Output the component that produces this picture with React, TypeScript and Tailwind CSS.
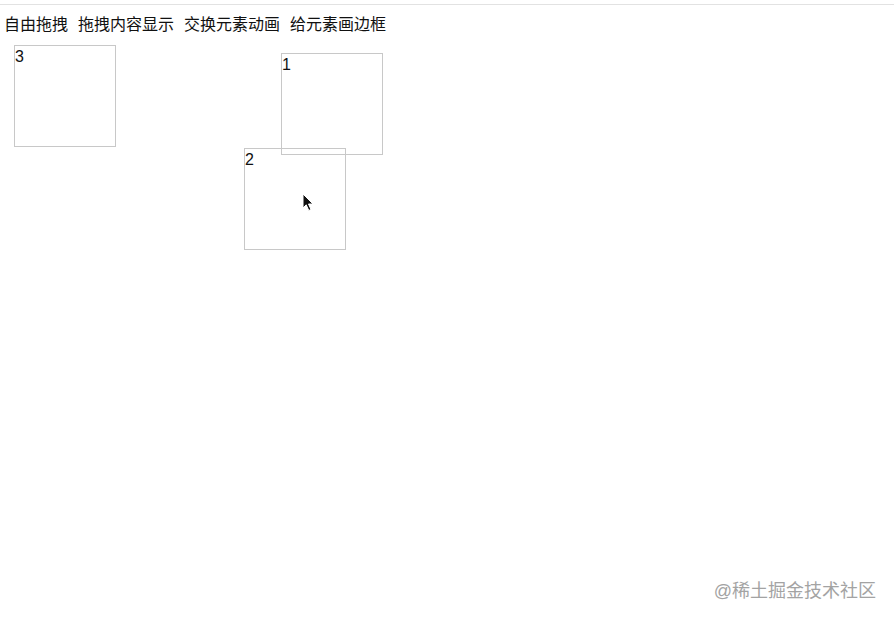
const tabs = ["自由拖拽", "拖拽内容显示", "交换元素动画", "给元素画边框"];

const boxes = [
  { id: 3, cls: "left-[14px] top-[45px]" },
  { id: 1, cls: "left-[281px] top-[53px]" },
  { id: 2, cls: "left-[244px] top-[148px]" },
];

export default function App() {
  return (
    <div
      className="relative h-[620px] w-full overflow-hidden bg-white text-[#111]"
      style={{ fontFamily: '"Liberation Sans", "Noto Sans CJK SC", sans-serif' }}
    >
      <div className="mt-[4px] h-px w-full bg-[#e2e2e2]" />
      <nav className="flex gap-[10px] pl-[4px] pt-[8px] text-[16px] leading-6">
        {tabs.map((t) => (
          <span key={t}>{t}</span>
        ))}
      </nav>

      {boxes.map((b) => (
        <div
          key={b.id}
          className={`absolute h-[102px] w-[102px] border border-[#c8c8c8] pt-px text-[16px] leading-5 ${b.cls}`}
        >
          {b.id}
        </div>
      ))}

      {/* mouse pointer */}
      <svg className="absolute left-[302px] top-[193px]" width="13" height="19" viewBox="0 0 13 19">
        <path d="M1 1 L1 15 L4.2 11.8 L6.8 17.5 L9 16.5 L6.5 11 L11 11 Z" fill="#111" stroke="#fff" strokeWidth="1" />
      </svg>

      <div className="absolute bottom-[17px] right-[18px] text-[18px] leading-6 text-[#a3a3a3] [text-shadow:0_0_2px_#fff]">
        @稀土掘金技术社区
      </div>
    </div>
  );
}
